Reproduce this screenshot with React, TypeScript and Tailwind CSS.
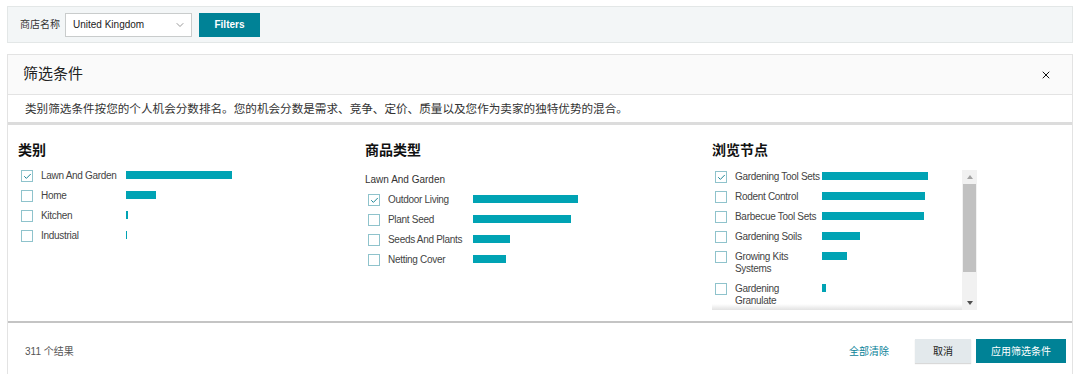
import { Check, ChevronDown, X } from "lucide-react";

type TItem = { label: string; width: number; checked?: boolean };

const categories: TItem[] = [
  { label: "Lawn And Garden", width: 106, checked: true },
  { label: "Home", width: 30 },
  { label: "Kitchen", width: 2 },
  { label: "Industrial", width: 1 },
];

const productTypes: TItem[] = [
  { label: "Outdoor Living", width: 105, checked: true },
  { label: "Plant Seed", width: 98 },
  { label: "Seeds And Plants", width: 37 },
  { label: "Netting Cover", width: 33 },
];

const browseNodes: TItem[] = [
  { label: "Gardening Tool Sets", width: 106, checked: true },
  { label: "Rodent Control", width: 103 },
  { label: "Barbecue Tool Sets", width: 102 },
  { label: "Gardening Soils", width: 38 },
  { label: "Growing Kits Systems", width: 25 },
  { label: "Gardening Granulate", width: 4 },
  { label: "Plant Supports", width: 3 },
];

function Checkbox({ checked }: { checked?: boolean }) {
  return (
    <span className="flex size-[12px] shrink-0 items-center justify-center border border-[#8fc3cc] bg-white">
      {checked && <Check className="size-[9px] text-[#0f7d8f]" strokeWidth={2.5} />}
    </span>
  );
}

// labelWidth includes the 8px left padding
function Row({ item, labelWidth = 93 }: { item: TItem; labelWidth?: number }) {
  return (
    <li className="flex items-start py-[4px]">
      <Checkbox checked={item.checked} />
      <span
        className="shrink-0 pl-[8px] text-[10px] leading-[12px] tracking-[-0.3px] text-[#444]"
        style={{ width: labelWidth }}
      >
        {item.label}
      </span>
      <span className="mt-[1px] h-[8px] bg-[#00a3b4]" style={{ width: item.width }} />
    </li>
  );
}

export default function App() {
  return (
    <div
      className="min-h-[374px] bg-white pt-[6px]"
      style={{ fontFamily: '"Liberation Sans", "Noto Sans CJK SC", sans-serif' }}
    >
      {/* top filter bar */}
      <div className="mx-[7px] flex h-[37px] items-center border border-[#e3e7e7] bg-[#f3f6f7] pl-[12px]">
        <span className="text-[10px] text-[#333]">商店名称</span>
        <div className="ml-[5px] flex h-[24px] w-[127px] items-center justify-between border border-[#c9cccc] bg-white pl-[7px] pr-[5px]">
          <span className="text-[10px] text-[#222]">United Kingdom</span>
          <ChevronDown className="size-[12px] text-[#777]" strokeWidth={1.5} />
        </div>
        <button className="ml-[7px] flex h-[24px] w-[61px] items-center justify-center bg-[#008296] text-[10px] font-bold text-white">
          Filters
        </button>
      </div>

      {/* modal */}
      <div className="mx-[7px] mt-[11px] border-x border-t border-[#e3e3e3]">
        <div className="flex h-[40px] items-center justify-between border-b border-[#e3e3e3] bg-[#fafafa] pl-[15px] pr-[20px]">
          <h2 className="text-[15px] font-normal text-[#222]">筛选条件</h2>
          <X className="size-[12px] text-[#111]" strokeWidth={2} />
        </div>
        <p className="flex h-[30px] items-center border-b-[3px] border-[#dcdcdc] pl-[17px] text-[11.6px] text-[#333]">
          类别筛选条件按您的个人机会分数排名。您的机会分数是需求、竞争、定价、质量以及您作为卖家的独特优势的混合。
        </p>

        <div className="grid h-[198px] grid-cols-[347px_347px_1fr] border-b-2 border-[#c4c4c4] pl-[10px] pt-[15px]">
          <section>
            <h3 className="text-[14px] font-bold leading-[20px] text-[#111]">类别</h3>
            <ul className="mt-[6px] pl-[3px]">
              {categories.map((item) => (
                <Row key={item.label} item={item} />
              ))}
            </ul>
          </section>

          <section>
            <h3 className="text-[14px] font-bold leading-[20px] text-[#111]">商品类型</h3>
            <p className="mt-[14px] text-[10px] leading-[12px] text-[#333]">Lawn And Garden</p>
            <ul className="mt-[4px] pl-[3px]">
              {productTypes.map((item) => (
                <Row key={item.label} item={item} />
              ))}
            </ul>
          </section>

          <section>
            <h3 className="text-[14px] font-bold leading-[20px] text-[#111]">浏览节点</h3>
            <div className="mt-[10px] flex h-[140px] w-[265px]">
              <div className="relative flex-1 overflow-hidden">
                <ul className="-mt-[3px] pl-[3px]">
                  {browseNodes.map((item) => (
                    <Row key={item.label} item={item} labelWidth={95} />
                  ))}
                </ul>
                <div className="absolute bottom-0 left-0 right-0 h-[6px] bg-gradient-to-b from-transparent to-[#d6d6d6] opacity-70" />
              </div>
              <div className="flex w-[15px] flex-col items-center bg-[#f1f1f1]">
                <span className="mt-[5px] h-0 w-0 border-x-[3px] border-b-[4px] border-x-transparent border-b-[#a3a3a3]" />
                <span className="mt-[5px] h-[88px] w-[13px] bg-[#c1c1c1]" />
                <span className="mt-auto mb-[5px] h-0 w-0 border-x-[3px] border-t-[4px] border-x-transparent border-t-[#505050]" />
              </div>
            </div>
          </section>
        </div>

        <div className="flex h-[52px] items-center pl-[17px] pr-[6px] pt-[4px]">
          <span className="text-[10px] text-[#555]">311 个结果</span>
          <button className="ml-auto mr-[26px] text-[10px] text-[#0b8399]">全部清除</button>
          <button className="h-[24px] w-[56px] bg-[#e3e9ec] text-[10px] text-[#222] shadow-[0_1px_1px_rgba(0,0,0,0.15)]">
            取消
          </button>
          <button className="ml-[5px] h-[24px] w-[90px] bg-[#008296] text-[10px] text-white">
            应用筛选条件
          </button>
        </div>
      </div>
    </div>
  );
}
